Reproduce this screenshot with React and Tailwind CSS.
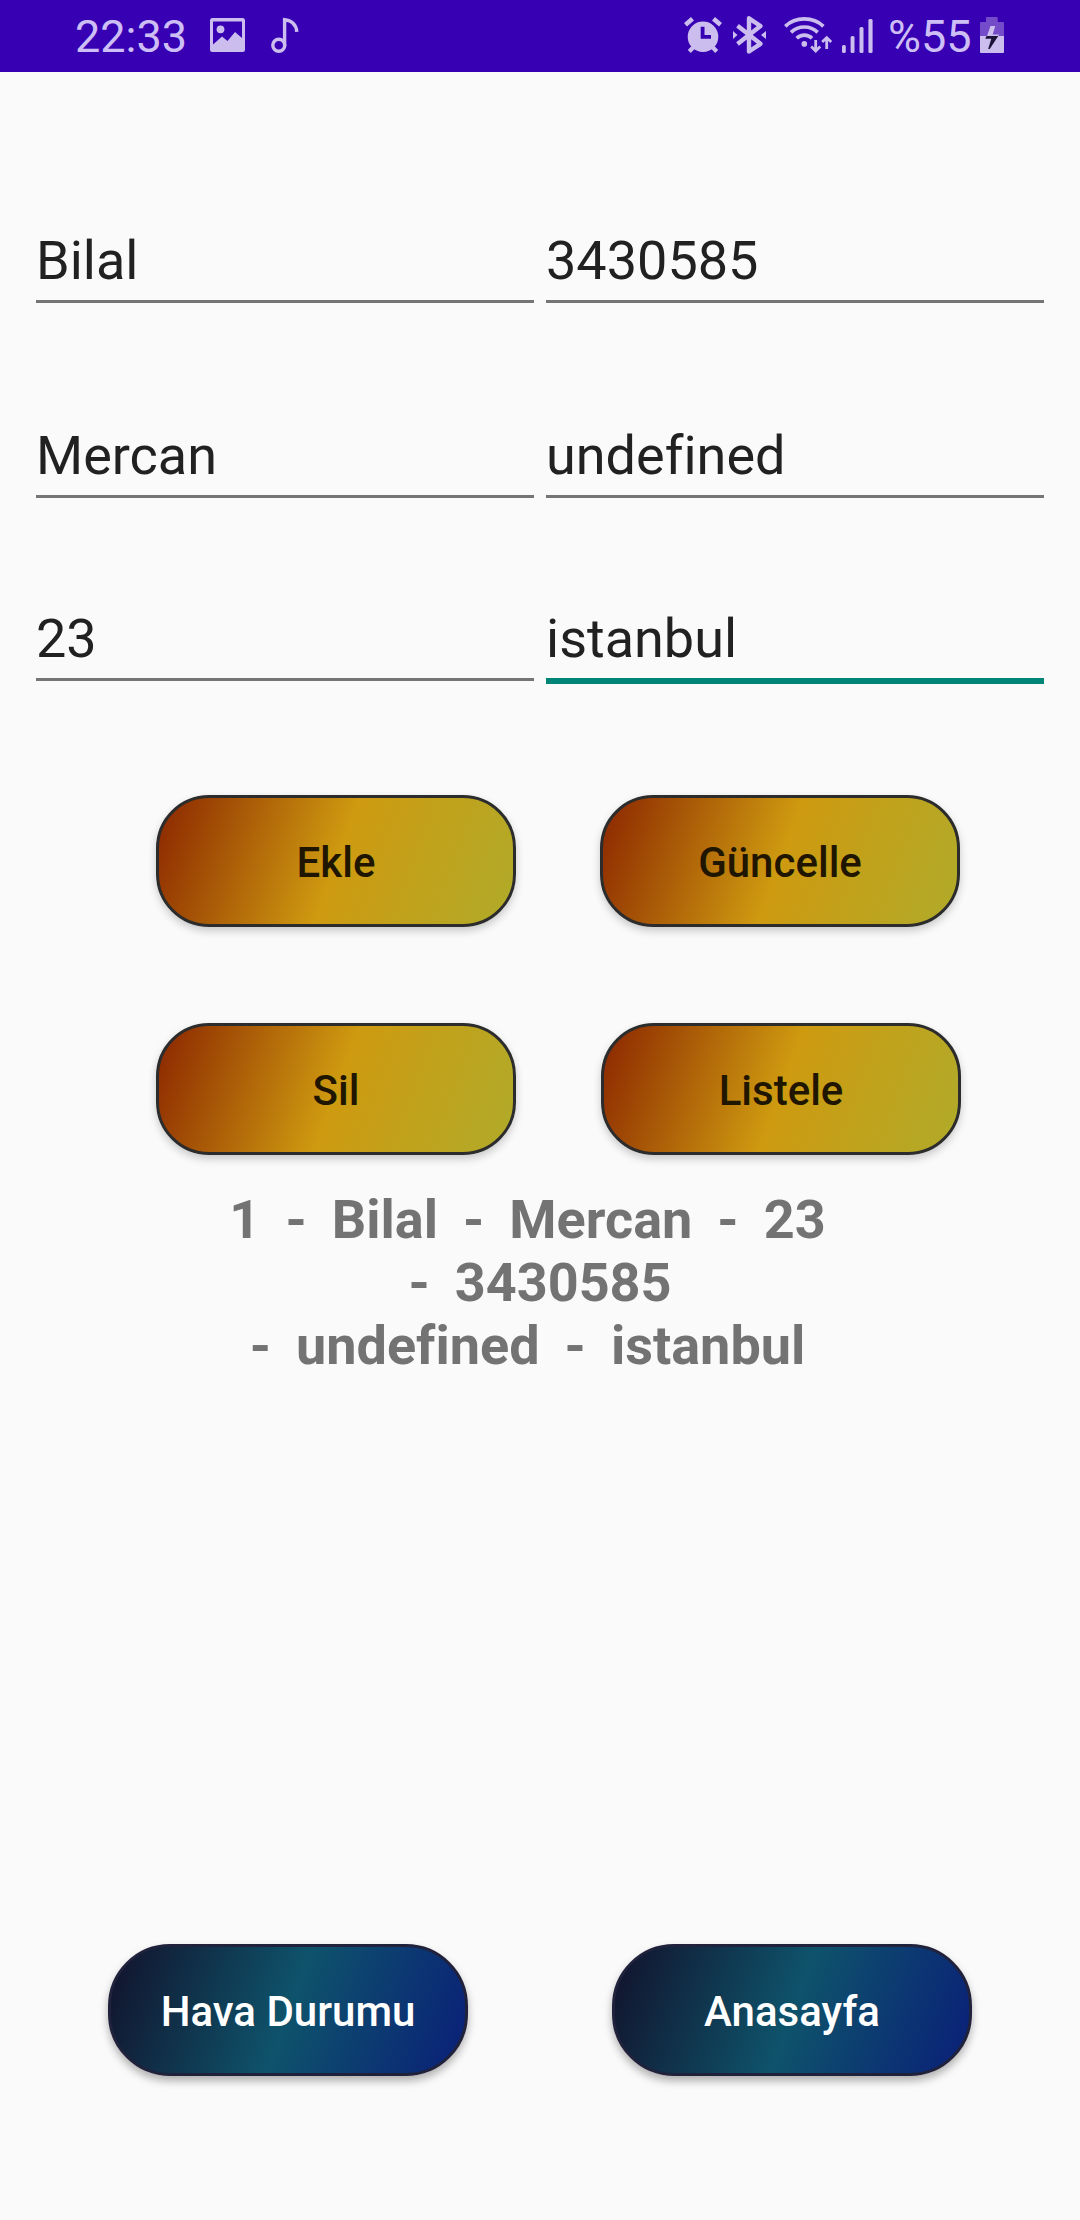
const GLYPH = '#cbbdee';

function PictureIcon() {
  return (
    <svg className="ml-[24px] h-[72px] w-[36px] shrink-0" viewBox="210 0 36 72" fill={GLYPH}>
      <path
        fillRule="evenodd"
        d="M212.5 18h30a2.5 2.5 0 0 1 2.500 2.500v29a2.500 2.500 0 0 1-2.500 2.500h-30a2.500 2.500 0 0 1-2.500-2.500v-29a2.500 2.500 0 0 1 2.500-2.500zM213 21.500V44.500L222 36.500L227.500 41L235 32L242 38V21.500z"
      />
      <circle cx="220.500" cy="29.300" r="3.900" />
    </svg>
  );
}

function NoteIcon() {
  return (
    <svg className="ml-[24px] h-[72px] w-[30px] shrink-0" viewBox="270 0 30 72" fill="none" stroke={GLYPH} strokeWidth="3.4">
      <circle cx="278.800" cy="45.200" r="6" />
      <path d="M284.600 46V19.700C291.500 20.200 296.300 24.500 296.800 31.800" />
    </svg>
  );
}

function AlarmIcon() {
  return (
    <svg className="h-[72px] w-[40px] shrink-0" viewBox="683 0 40 72" fill="none" stroke={GLYPH}>
      <circle cx="703" cy="36.700" r="15.300" fill={GLYPH} stroke="none" />
      <path strokeWidth="4.600" d="M685.500 24.800L692.500 18.800M720.500 24.800L713.500 18.800" />
      <path strokeWidth="4.200" d="M689.300 51.500L694 46.500M716.700 51.500L712 46.500" />
      <path stroke="#3700b3" strokeWidth="3.800" d="M702.600 26.700V36.900H711" />
    </svg>
  );
}

function BluetoothIcon() {
  return (
    <svg className="ml-[8px] h-[72px] w-[38px] shrink-0" viewBox="731 0 38 72" fill="none" stroke={GLYPH}>
      <path
        strokeWidth="4.400"
        strokeLinejoin="round"
        d="M737.500 25.800L760.500 43.800L749 51.500V18.300L760.500 26L737.500 44"
      />
      <path fill={GLYPH} stroke="none" d="M733 31v8l4.500-4zM766 31v8l-5-4z" />
    </svg>
  );
}

function WifiIcon() {
  return (
    <svg className="ml-[14px] h-[72px] w-[50px] shrink-0" viewBox="783 0 50 72" fill="none" stroke={GLYPH} strokeWidth="3.700">
      <path d="M785.300 26.300C795.500 16.500 813.200 16.500 823.400 26.300" />
      <path d="M791 32.300C798.500 25.200 810.200 25.200 817.700 32.300" />
      <path d="M796.700 38.200C801 34 807.700 34 812 38.200" />
      <circle cx="804.300" cy="43.900" r="2.800" fill={GLYPH} stroke="none" />
      <path strokeWidth="2.800" d="M815.700 40V50.500M811.200 46.600L815.700 51L820.200 46.600M826.700 49V38M822.200 42L826.700 37.600L831.200 42" />
    </svg>
  );
}

function SignalIcon() {
  return (
    <svg className="ml-[8px] h-[72px] w-[32px] shrink-0" viewBox="841 0 32 72" fill={GLYPH}>
      <rect x="842" y="45" width="3.800" height="8" rx="1.500" />
      <rect x="850.600" y="36" width="3.900" height="17" rx="1.500" />
      <rect x="859.500" y="27" width="4" height="26" rx="1.500" />
      <rect x="868.400" y="19" width="4.200" height="34" rx="1.500" />
    </svg>
  );
}

function BatteryIcon() {
  return (
    <svg className="ml-[8px] h-[72px] w-[24px] shrink-0" viewBox="980 0 24 72" fill={GLYPH}>
      <path fill="#744bc9" d="M986 18q0-1 1-1h9.700q1 0 1 1v4h5.300q1 0 1 1v13h-24v-13q0-1 1-1h5z" />
      <path d="M980 36h24v16q0 1-1 1h-22q-1 0-1-1z" />
      <path d="M990.500 26H995.300L992.700 34.500H999L998.200 36H987z" />
      <path fill="#1b1238" d="M986.500 36H998.300L989.700 49H988.200L991.300 38.700H985.300z" />
    </svg>
  );
}

function StatusBar() {
  return (
    <header className="flex h-[72px] w-full items-center bg-[#3700b3] text-[45px] leading-[72px] text-[#cdbef5]">
      <span className="ml-[75px] w-[111px] whitespace-nowrap pt-px">22:33</span>
      <PictureIcon />
      <NoteIcon />
      <div className="ml-auto flex items-center pr-[76px]">
        <AlarmIcon />
        <BluetoothIcon />
        <WifiIcon />
        <SignalIcon />
        <span className="ml-[15px] w-[84px] whitespace-nowrap pt-px">%55</span>
        <BatteryIcon />
      </div>
    </header>
  );
}

function Field({ value, focused }) {
  return (
    <div
      className={
        focused
          ? 'h-[77px] border-b-[6px] border-[#018577] leading-[64px]'
          : 'h-[74px] border-b-[3px] border-[#757575] leading-[64px]'
      }
    >
      {value}
    </div>
  );
}

function FieldRow({ className, left, right, focused }) {
  return (
    <div className={`grid grid-cols-2 items-start gap-3 px-9 text-[54px] text-[#212121] ${className}`}>
      <Field value={left} />
      <Field value={right} focused={focused} />
    </div>
  );
}

const BASE = 'flex h-[132px] w-[360px] shrink-0 items-center justify-center border-[3px] pt-[3px] text-[42px] font-medium';

function ActionButton({ children }) {
  return (
    <button
      className={`${BASE} rounded-[53px] border-[#2c2c2c] bg-[linear-gradient(109.900deg,#8b2600_0%,#ce9a10_50%,#b0ab2a_100%)] text-[#201600] shadow-[0_4px_8px_rgba(0,0,0,0.2)]`}
    >
      {children}
    </button>
  );
}

function NavButton({ children }) {
  return (
    <button
      className={`${BASE} rounded-[62px] border-[#20223b] bg-[linear-gradient(109.900deg,#12122b_0%,#0e536b_50%,#0a1f78_100%)] text-white shadow-[0_5px_9px_rgba(0,0,0,0.3)]`}
    >
      {children}
    </button>
  );
}

export default function App() {
  return (
    <div className="flex h-[2220px] w-[1080px] flex-col overflow-hidden bg-[#fafafa] font-['Roboto',sans-serif] [font-variant-ligatures:none]">
      <StatusBar />
      <FieldRow className="mt-[157px] h-[74px]" left="Bilal" right="3430585" />
      <FieldRow className="mt-[121px] h-[74px]" left="Mercan" right="undefined" />
      <FieldRow className="mt-[109px] h-[77px]" left="23" right="istanbul" focused />

      <div className="mt-[111px] flex gap-[84px] pl-[156px]">
        <ActionButton>Ekle</ActionButton>
        <ActionButton>Güncelle</ActionButton>
      </div>
      <div className="mt-24 flex gap-[85px] pl-[156px]">
        <ActionButton>Sil</ActionButton>
        <ActionButton>Listele</ActionButton>
      </div>

      <div className="mt-[33px] h-[189px] text-center text-[54px] leading-[63px] font-bold whitespace-pre text-[#737373] [word-spacing:-0.9px]">
        <div className="pr-[25px]">{'1  -  Bilal  -  Mercan  -  23'}</div>
        <div>{'-  3430585'}</div>
        <div className="pr-[25px]">{'-  undefined  -  istanbul'}</div>
      </div>

      <div className="mt-auto mb-36 flex gap-36 pl-[108px]">
        <NavButton>Hava Durumu</NavButton>
        <NavButton>Anasayfa</NavButton>
      </div>
    </div>
  );
}
